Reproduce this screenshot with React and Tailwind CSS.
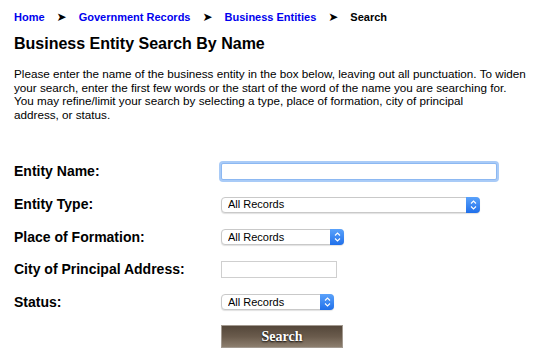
import React from "react";

const crumbs = [
  { label: "Home", link: true },
  { label: "Government Records", link: true },
  { label: "Business Entities", link: true },
  { label: "Search", link: false },
];

const Stepper = () => (
  <span className="absolute right-0 top-0 bottom-0 w-[14px] rounded-r-[4px] bg-gradient-to-b from-[#5aa2fb] to-[#1f6fea] flex items-center justify-center pointer-events-none">
    <svg width="7" height="10" viewBox="0 0 7 10" fill="none">
      <path d="M1 3.5 L3.5 1 L6 3.5" stroke="white" strokeWidth="1.1" />
      <path d="M1 6.5 L3.5 9 L6 6.5" stroke="white" strokeWidth="1.1" />
    </svg>
  </span>
);

const Select = ({ width }) => (
  <div className={`relative h-[16px] ${width}`}>
    <select className="block appearance-none w-full h-full pl-[6px] text-[11px] leading-none text-black bg-white border border-[#c9c9c9] rounded-[4px] shadow-[0_1px_1px_rgba(0,0,0,0.12)] outline-none">
      <option>All Records</option>
    </select>
    <Stepper />
  </div>
);

const Row = ({ label, h, children }) => (
  <div className={`flex items-center ${h}`}>
    <div className="w-[207px] text-[14px] font-bold text-black">{label}</div>
    {children}
  </div>
);

export default function App() {
  return (
    <div className="w-[550px] h-[362px] bg-white px-[14px] pt-[10px] font-['Liberation_Sans',Arial,sans-serif] text-black overflow-hidden">
      {/* breadcrumb */}
      <div className="flex items-center h-[14px] text-[11px] font-bold">
        {crumbs.map((c, i) => (
          <React.Fragment key={c.label}>
            {c.link ? (
              <a href="#" className="text-[#0000ee]">{c.label}</a>
            ) : (
              <span className="text-black">{c.label}</span>
            )}
            {i < crumbs.length - 1 && (
              <span className="mx-[12px] text-[12px] leading-none font-['DejaVu_Sans',sans-serif]">➤</span>
            )}
          </React.Fragment>
        ))}
      </div>

      <h1 className="mt-[9px] text-[16px] font-bold leading-[22px]">Business Entity Search By Name</h1>

      <p className="mt-[12px] text-[11.7px] leading-[13.5px] whitespace-nowrap">
        Please enter the name of the business entity in the box below, leaving out all punctuation. To widen
        <br />
        your search, enter the first few words or the start of the word of the name you are searching for.
        <br />
        You may refine/limit your search by selecting a type, place of formation, city of principal
        <br />
        address, or status.
      </p>

      <form className="mt-[34px] flex flex-col" onSubmit={(e) => e.preventDefault()}>
        <Row label="Entity Name:" h="h-[33px]">
          <input
            autoFocus
            className="w-[276px] h-[17px] bg-white border border-[#8cb8f2] rounded-[2px] shadow-[0_0_0_2px_#a9cbf7] outline-none text-[12px] px-[2px]"
          />
        </Row>
        <Row label="Entity Type:" h="h-[33px]">
          <Select width="w-[259px]" />
        </Row>
        <Row label="Place of Formation:" h="h-[32px]">
          <Select width="w-[123px]" />
        </Row>
        <Row label="City of Principal Address:" h="h-[33px]">
          <input className="w-[116px] h-[17px] bg-white border border-[#cfcfcf] outline-none text-[12px] px-[2px]" />
        </Row>
        <Row label="Status:" h="h-[32px]">
          <Select width="w-[113px]" />
        </Row>
        <div className="flex mt-[7px] pl-[207px]">
          <button
            type="submit"
            className="w-[122px] h-[23px] border border-[#a39a90] bg-gradient-to-b from-[#54473a] via-[#6a5b4c] to-[#8c7e6e] text-white text-[14px] font-bold font-['Liberation_Serif',serif] [text-shadow:0_1px_2px_#000]"
          >
            Search
          </button>
        </div>
      </form>
    </div>
  );
}
